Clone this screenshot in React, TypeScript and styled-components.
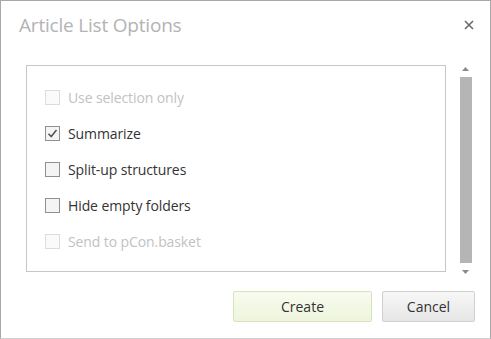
import styled, { createGlobalStyle } from "styled-components";

const GlobalStyle = createGlobalStyle`
  html, body {
    margin: 0;
    padding: 0;
    background: #ffffff;
  }
  body {
    font-family: "Open Sans", "Noto Sans", sans-serif;
  }
`;

type Option = { label: string; checked: boolean; disabled: boolean };

const options: Option[] = [
  { label: "Use selection only", checked: false, disabled: true },
  { label: "Summarize", checked: true, disabled: false },
  { label: "Split-up structures", checked: false, disabled: false },
  { label: "Hide empty folders", checked: false, disabled: false },
  { label: "Send to pCon.basket", checked: false, disabled: true },
];

export default function App() {
  return (
    <>
      <GlobalStyle />
      <Dialog>
        <Header>
          <Title>Article List Options</Title>
          <CloseButton aria-label="Close">
            <svg width="10" height="10" viewBox="0 0 10 10">
              <path d="M1 1 L9 9 M9 1 L1 9" stroke="#6a6a6a" strokeWidth="1.6" />
            </svg>
          </CloseButton>
        </Header>
        <Body>
          <ListBox>
            {options.map((opt) => (
              <Row key={opt.label} $disabled={opt.disabled}>
                <Box $disabled={opt.disabled}>
                  {opt.checked && (
                    <svg width="13" height="13" viewBox="0 0 13 13">
                      <path
                        d="M2.5 6.8 L5.2 9.5 L10.5 3"
                        fill="none"
                        stroke="#555"
                        strokeWidth="1.6"
                      />
                    </svg>
                  )}
                </Box>
                <Label>{opt.label}</Label>
              </Row>
            ))}
          </ListBox>
          <ScrollBar>
            <Arrow>
              <svg width="7" height="4" viewBox="0 0 7 4">
                <path d="M0 4 L3.5 0 L7 4 Z" fill="#8a8a8a" />
              </svg>
            </Arrow>
            <Thumb />
            <Arrow>
              <svg width="7" height="4" viewBox="0 0 7 4">
                <path d="M0 0 L3.5 4 L7 0 Z" fill="#8a8a8a" />
              </svg>
            </Arrow>
          </ScrollBar>
        </Body>
        <Footer>
          <Button $primary>Create</Button>
          <Button>Cancel</Button>
        </Footer>
      </Dialog>
    </>
  );
}

const Dialog = styled.div`
  box-sizing: border-box;
  width: 491px;
  height: 339px;
  border: 1px solid #a8a8a8;
  border-bottom-color: #d0d0d0;
  display: flex;
  flex-direction: column;
  background: #fff;
`;

const Header = styled.div`
  display: flex;
  align-items: center;
  justify-content: space-between;
  height: 47px;
  padding: 0 14px 0 18px;
`;

const Title = styled.div`
  font-size: 19px;
  color: #b3b3b3;
  letter-spacing: -0.2px;
`;

const CloseButton = styled.div`
  display: flex;
  align-items: center;
  justify-content: center;
  width: 14px;
  height: 14px;
`;

const Body = styled.div`
  display: flex;
  padding: 17px 0 0 25px;
  gap: 13px;
`;

const ListBox = styled.div`
  box-sizing: border-box;
  width: 420px;
  height: 207px;
  border: 1px solid #c6c6c6;
  padding: 24px 0 0 18px;
  display: flex;
  flex-direction: column;
  gap: 21px;
`;

const Row = styled.div<{ $disabled?: boolean }>`
  display: flex;
  align-items: center;
  gap: 8px;
  height: 15px;
  color: ${(p) => (p.$disabled ? "#c2c2c2" : "#333333")};
`;

const Box = styled.div<{ $disabled?: boolean }>`
  box-sizing: border-box;
  width: 15px;
  height: 15px;
  border: 1px solid ${(p) => (p.$disabled ? "#dcdcdc" : "#8f8f8f")};
  background: ${(p) => (p.$disabled ? "#fafafa" : "#f4f4f4")};
  display: flex;
  align-items: center;
  justify-content: center;
`;

const Label = styled.span`
  font-size: 14px;
  line-height: 15px;
  letter-spacing: -0.1px;
`;

const ScrollBar = styled.div`
  width: 13px;
  height: 210px;
  display: flex;
  flex-direction: column;
  align-items: center;
  gap: 5px;
`;

const Arrow = styled.div`
  height: 7px;
  display: flex;
  align-items: center;
  justify-content: center;
`;

const Thumb = styled.div`
  width: 12px;
  flex: 1;
  background: #b5b5b5;
`;

const Footer = styled.div`
  display: flex;
  justify-content: flex-end;
  gap: 10px;
  padding: 16px 15px 0 0;
`;

const Button = styled.div<{ $primary?: boolean }>`
  box-sizing: border-box;
  height: 31px;
  width: ${(p) => (p.$primary ? "139px" : "93px")};
  display: flex;
  align-items: center;
  justify-content: center;
  font-size: 14px;
  color: #333;
  border-radius: 2px;
  border: 1px solid ${(p) => (p.$primary ? "#d6e4bd" : "#cfcfcf")};
  background: ${(p) =>
    p.$primary
      ? "linear-gradient(#f8fbef, #eef5dc)"
      : "linear-gradient(#f7f7f7, #e6e6e6)"};
`;
